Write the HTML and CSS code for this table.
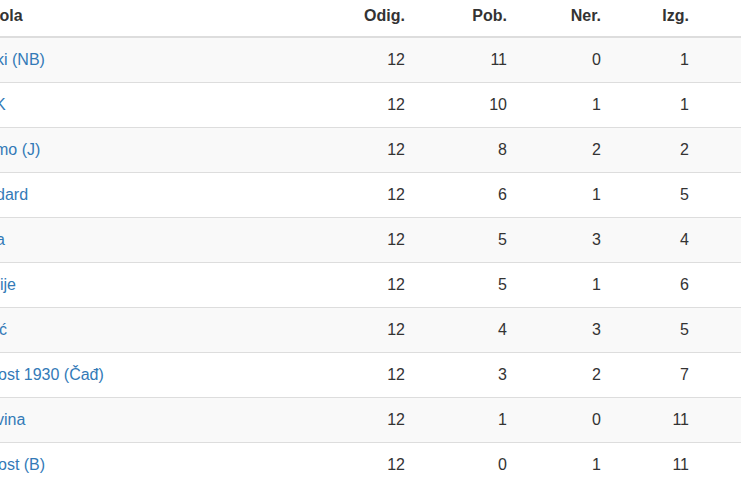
FILE: index.html
```html
<!DOCTYPE html>
<html lang="hr">
<head>
<meta charset="utf-8">
<title>Tablica</title>
<link rel="stylesheet" href="styles.css">
</head>
<body>
<div class="viewport">
  <table class="table">
    <colgroup>
      <col class="c-name">
      <col class="c-odig">
      <col class="c-pob">
      <col class="c-ner">
      <col class="c-izg">
    </colgroup>
    <thead>
      <tr>
        <th class="name s20">Škola</th>
        <th>Odig.</th>
        <th>Pob.</th>
        <th>Ner.</th>
        <th>Izg.</th>
      </tr>
    </thead>
    <tbody>
      <tr><td class="name s4"><a href="#">ki (NB)</a></td><td>12</td><td>11</td><td>0</td><td>1</td></tr>
      <tr><td class="name s5"><a href="#">K</a></td><td>12</td><td>10</td><td>1</td><td>1</td></tr>
      <tr><td class="name s5"><a href="#">mo (J)</a></td><td>12</td><td>8</td><td>2</td><td>2</td></tr>
      <tr><td class="name s4"><a href="#">dard</a></td><td>12</td><td>6</td><td>1</td><td>5</td></tr>
      <tr><td class="name s4"><a href="#">a</a></td><td>12</td><td>5</td><td>3</td><td>4</td></tr>
      <tr><td class="name s0"><a href="#">ije</a></td><td>12</td><td>5</td><td>1</td><td>6</td></tr>
      <tr><td class="name s1"><a href="#">ć</a></td><td>12</td><td>4</td><td>3</td><td>5</td></tr>
      <tr><td class="name s2"><a href="#">ost 1930 (Čađ)</a></td><td>12</td><td>3</td><td>2</td><td>7</td></tr>
      <tr><td class="name s4"><a href="#">vina</a></td><td>12</td><td>1</td><td>0</td><td>11</td></tr>
      <tr><td class="name s2"><a href="#">ost (B)</a></td><td>12</td><td>0</td><td>1</td><td>11</td></tr>
    </tbody>
  </table>
</div>
</body>
</html>
```

FILE: styles.css
```css
html, body {
  margin: 0;
  padding: 0;
  background: #fff;
  overflow: hidden;
}

body {
  font-family: "Liberation Sans", Arial, sans-serif;
  font-size: 16px;
  line-height: 24px;
  color: #333;
}

.viewport {
  width: 741px;
  height: 486px;
  overflow: hidden;
}

.table {
  border-collapse: separate;
  border-spacing: 0;
  table-layout: fixed;
  width: 810px;
  margin-left: -10px;
}

.c-name { width: 336px; }
.c-odig { width: 89px; }
.c-pob  { width: 102px; }
.c-ner  { width: 94px; }
.c-izg  { width: 189px; }

.table th,
.table td {
  padding: 10px 10px;
  text-align: right;
  white-space: nowrap;
}

.table th {
  font-weight: bold;
  vertical-align: bottom;
  padding-top: 4px;
  padding-bottom: 8px;
  border-bottom: 2px solid #ddd;
}

.table td {
  vertical-align: top;
  border-top: 1px solid #ddd;
}

.table tbody tr:first-child td {
  border-top: 0;
}

.table tbody tr:nth-child(odd) td {
  background: #f9f9f9;
}

.table th:last-child,
.table td:last-child {
  padding-right: 111px;
}

.table .name {
  text-align: left;
}

.table a {
  color: #337ab7;
  text-decoration: none;
}

.s0 { text-indent: 0; }
.s1 { text-indent: -1px; }
.s2 { text-indent: -2px; }
.s4 { text-indent: -4px; }
.s5 { text-indent: -5px; }
.s20 { text-indent: -20px; }
```
